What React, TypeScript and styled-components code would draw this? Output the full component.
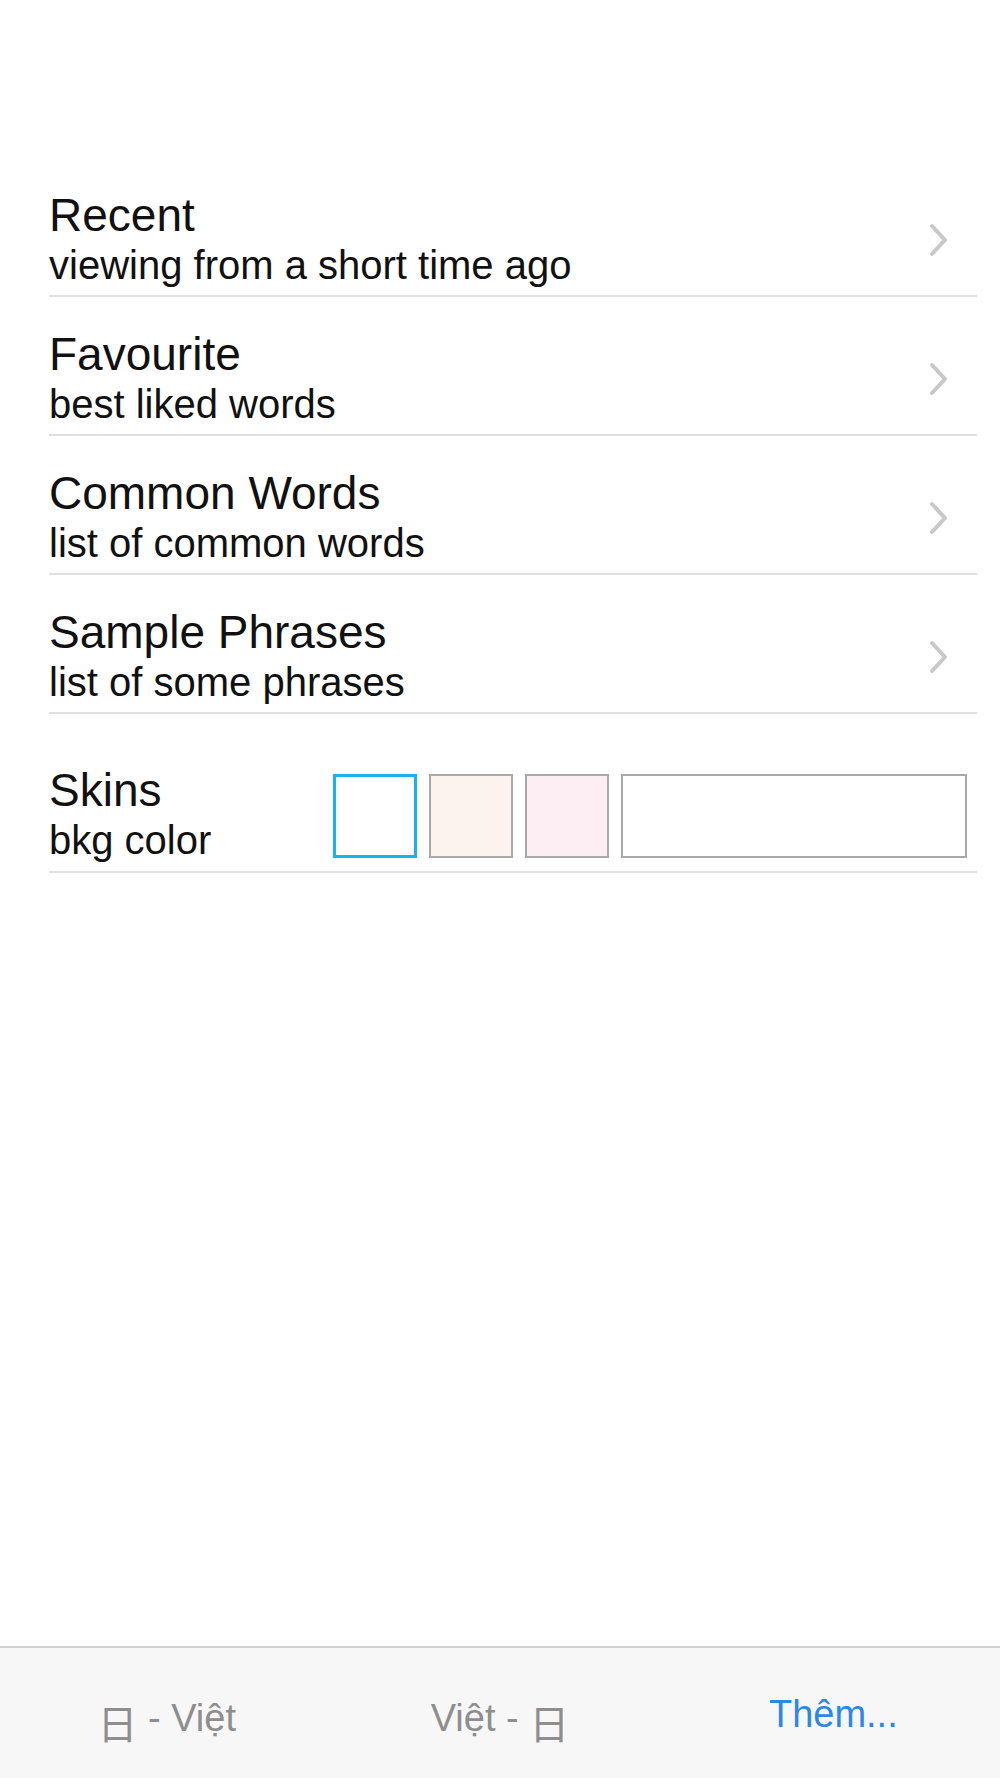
import React from 'react';
import styled, { createGlobalStyle } from 'styled-components';

const GlobalStyle = createGlobalStyle`
	html, body {
		margin: 0;
		padding: 0;
		background: #ffffff;
	}
	body {
		font-family: 'Liberation Sans', 'Noto Sans CJK JP', Arial, sans-serif;
		color: #111111;
	}
`;

interface MenuItem {
	title: string;
	subtitle: string;
}

const menuItems: MenuItem[] = [
	{ title: 'Recent', subtitle: 'viewing from a short time ago' },
	{ title: 'Favourite', subtitle: 'best liked words' },
	{ title: 'Common Words', subtitle: 'list of common words' },
	{ title: 'Sample Phrases', subtitle: 'list of some phrases' },
];

const skins = [
	{ color: '#ffffff', selected: true, wide: false },
	{ color: '#fdf3ee', selected: false, wide: false },
	{ color: '#fdeef3', selected: false, wide: false },
	{ color: '#ffffff', selected: false, wide: true },
];

const Chevron = () => (
	<ChevronIcon width="22" height="34" viewBox="0 0 22 34">
		<path
			d="M4 3 L17 17 L4 31"
			fill="none"
			stroke="#c7c7cc"
			strokeWidth="4"
			strokeLinecap="round"
			strokeLinejoin="round"
		/>
	</ChevronIcon>
);

const App = () => {
	return (
		<Screen>
			<GlobalStyle />
			<List>
				{menuItems.map((item) => (
					<Row key={item.title}>
						<TextBlock>
							<Title>{item.title}</Title>
							<Subtitle>{item.subtitle}</Subtitle>
						</TextBlock>
						<Chevron />
					</Row>
				))}

				<SkinRow>
					<SkinLabel>
						<Title>Skins</Title>
						<Subtitle>bkg color</Subtitle>
					</SkinLabel>
					<Swatches>
						{skins.map((skin, i) => (
							<Swatch
								key={i}
								$color={skin.color}
								$selected={skin.selected}
								$wide={skin.wide}
							/>
						))}
					</Swatches>
				</SkinRow>
			</List>

			<TabBar>
				<Tab>
					<Kanji>日</Kanji> - Việt
				</Tab>
				<Tab>
					Việt - <Kanji>日</Kanji>
				</Tab>
				<Tab $active>Thêm...</Tab>
			</TabBar>
		</Screen>
	);
};

export default App;

const Screen = styled.div`
	width: 1000px;
	height: 1778px;
	display: flex;
	flex-direction: column;
	background: #ffffff;
`;

const List = styled.div`
	flex: 1;
	padding: 158px 23px 0 49px;
`;

const Row = styled.div`
	height: 139px;
	box-sizing: border-box;
	display: flex;
	align-items: flex-start;
	justify-content: space-between;
	border-bottom: 2px solid #e0e0e0;
	padding-top: 31px;
`;

const TextBlock = styled.div`
	display: flex;
	flex-direction: column;
`;

const Title = styled.div`
	font-size: 46px;
	line-height: 52px;
	color: #111111;
`;

const Subtitle = styled.div`
	font-size: 40px;
	line-height: 48px;
	color: #111111;
`;

const ChevronIcon = styled.svg`
	margin-top: 34px;
	margin-right: 27px;
`;

const SkinRow = styled.div`
	height: 159px;
	box-sizing: border-box;
	display: flex;
	align-items: flex-start;
	border-bottom: 2px solid #e0e0e0;
	padding-top: 50px;
`;

const SkinLabel = styled.div`
	width: 284px;
	display: flex;
	flex-direction: column;
`;

const Swatches = styled.div`
	display: flex;
	gap: 12px;
	margin-top: 10px;
`;

const Swatch = styled.div<{ $color: string; $selected: boolean; $wide: boolean }>`
	width: ${(p) => (p.$wide ? '346px' : '84px')};
	height: 84px;
	box-sizing: border-box;
	background: ${(p) => p.$color};
	border: ${(p) => (p.$selected ? '3px solid #1ab2ee' : '2px solid #a9a9a9')};
`;

const TabBar = styled.div`
	height: 132px;
	box-sizing: border-box;
	display: grid;
	grid-template-columns: repeat(3, 1fr);
	align-items: center;
	background: #f7f7f7;
	border-top: 2px solid #d0d0d0;
`;

const Tab = styled.div<{ $active?: boolean }>`
	text-align: center;
	font-size: 38px;
	color: ${(p) => (p.$active ? '#2d86e8' : '#8e8e8e')};
	padding-top: 2px;
`;

const Kanji = styled.span`
	font-family: 'Noto Sans CJK JP', sans-serif;
	font-size: 40px;
	position: relative;
	top: 8px;
`;
